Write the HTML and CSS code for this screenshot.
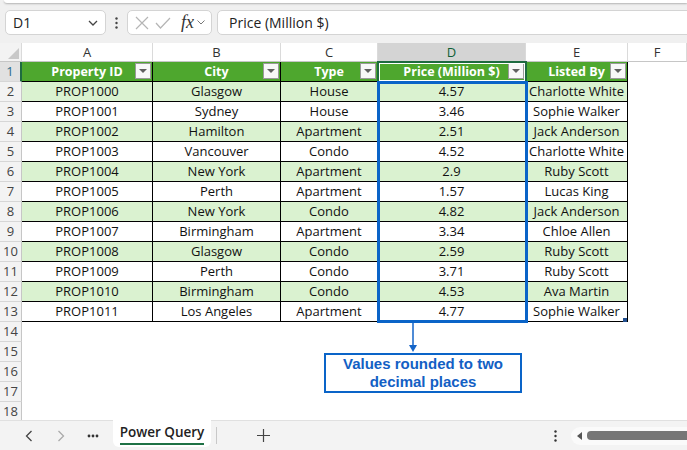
FILE: index.html
```
<!DOCTYPE html>
<html lang="en">

<head>
    <meta charset="UTF-8">
    <title>Power Query - Price</title>
    <link rel="stylesheet" href="styles.css">
</head>

<body>

    <!-- Formula bar -->
    <div class="topbar">
        <div class="ribbon-edge"></div>
        <div class="fbar">
            <div class="namebox">
                <span>D1</span>
                <svg width="10" height="6" viewBox="0 0 10 6"><polyline points="1,1 5,5 9,1" fill="none" stroke="#444" stroke-width="1.3"/></svg>
            </div>
            <div class="more">
                <svg width="3" height="12" viewBox="0 0 3 12"><circle cx="1.5" cy="1.5" r="1.2" fill="#444"/><circle cx="1.5" cy="6" r="1.2" fill="#444"/><circle cx="1.5" cy="10.5" r="1.2" fill="#444"/></svg>
            </div>
            <div class="fx-group">
                <svg width="14" height="14" viewBox="0 0 14 14"><path d="M1 1 L13 13 M13 1 L1 13" stroke="#b5b5b5" stroke-width="1.2"/></svg>
                <svg width="16" height="12" viewBox="0 0 16 12"><polyline points="1,6 5.5,11 15,1" fill="none" stroke="#b5b5b5" stroke-width="1.2"/></svg>
                <span class="fx">fx</span>
                <svg width="8" height="5" viewBox="0 0 8 5"><polyline points="0.5,0.5 4,4 7.5,0.5" fill="none" stroke="#777" stroke-width="1"/></svg>
            </div>
            <div class="formula">Price (Million $)</div>
        </div>
    </div>

    <!-- Grid -->
    <div class="sheet">
        <div class="row colhead">
            <div class="corner"><span class="tri"></span></div>
            <div>A</div>
            <div>B</div>
            <div>C</div>
            <div class="sel">D</div>
            <div>E</div>
            <div>F</div>
        </div>

        <div class="row">
            <div class="rn sel">1</div>
            <div class="c hd">Property ID<span class="flt"></span></div>
            <div class="c hd">City<span class="flt"></span></div>
            <div class="c hd">Type<span class="flt"></span></div>
            <div class="c hd">Price (Million $)<span class="flt"></span></div>
            <div class="c hd">Listed By<span class="flt"></span></div>
            <div class="e"></div>
        </div>
        <div class="row alt">
            <div class="rn">2</div>
            <div class="c">PROP1000</div><div class="c">Glasgow</div><div class="c">House</div><div class="c">4.57</div><div class="c">Charlotte White</div><div class="e"></div>
        </div>
        <div class="row">
            <div class="rn">3</div>
            <div class="c">PROP1001</div><div class="c">Sydney</div><div class="c">House</div><div class="c">3.46</div><div class="c">Sophie Walker</div><div class="e"></div>
        </div>
        <div class="row alt">
            <div class="rn">4</div>
            <div class="c">PROP1002</div><div class="c">Hamilton</div><div class="c">Apartment</div><div class="c">2.51</div><div class="c">Jack Anderson</div><div class="e"></div>
        </div>
        <div class="row">
            <div class="rn">5</div>
            <div class="c">PROP1003</div><div class="c">Vancouver</div><div class="c">Condo</div><div class="c">4.52</div><div class="c">Charlotte White</div><div class="e"></div>
        </div>
        <div class="row alt">
            <div class="rn">6</div>
            <div class="c">PROP1004</div><div class="c">New York</div><div class="c">Apartment</div><div class="c">2.9</div><div class="c">Ruby Scott</div><div class="e"></div>
        </div>
        <div class="row">
            <div class="rn">7</div>
            <div class="c">PROP1005</div><div class="c">Perth</div><div class="c">Apartment</div><div class="c">1.57</div><div class="c">Lucas King</div><div class="e"></div>
        </div>
        <div class="row alt">
            <div class="rn">8</div>
            <div class="c">PROP1006</div><div class="c">New York</div><div class="c">Condo</div><div class="c">4.82</div><div class="c">Jack Anderson</div><div class="e"></div>
        </div>
        <div class="row">
            <div class="rn">9</div>
            <div class="c">PROP1007</div><div class="c">Birmingham</div><div class="c">Apartment</div><div class="c">3.34</div><div class="c">Chloe Allen</div><div class="e"></div>
        </div>
        <div class="row alt">
            <div class="rn">10</div>
            <div class="c">PROP1008</div><div class="c">Glasgow</div><div class="c">Condo</div><div class="c">2.59</div><div class="c">Ruby Scott</div><div class="e"></div>
        </div>
        <div class="row">
            <div class="rn">11</div>
            <div class="c">PROP1009</div><div class="c">Perth</div><div class="c">Condo</div><div class="c">3.71</div><div class="c">Ruby Scott</div><div class="e"></div>
        </div>
        <div class="row alt">
            <div class="rn">12</div>
            <div class="c">PROP1010</div><div class="c">Birmingham</div><div class="c">Condo</div><div class="c">4.53</div><div class="c">Ava Martin</div><div class="e"></div>
        </div>
        <div class="row">
            <div class="rn">13</div>
            <div class="c">PROP1011</div><div class="c">Los Angeles</div><div class="c">Apartment</div><div class="c">4.77</div><div class="c">Sophie Walker</div><div class="e"></div>
        </div>
        <div class="row"><div class="rn">14</div><div class="blank"></div></div>
        <div class="row"><div class="rn">15</div><div class="blank"></div></div>
        <div class="row"><div class="rn">16</div><div class="blank"></div></div>
        <div class="row"><div class="rn">17</div><div class="blank"></div></div>
        <div class="row"><div class="rn">18</div><div class="blank"></div></div>

        <!-- overlays: selection, highlight and note -->
        <div class="active-cell"></div>
        <div class="highlight"></div>
        <div class="resize-handle"></div>
        <svg class="arrow" width="16" height="30" viewBox="0 0 16 30">
            <line x1="8" y1="0" x2="8" y2="23" stroke="#1565c8" stroke-width="1.5"/>
            <polygon points="4,22 12,22 8,29" fill="#1565c8"/>
        </svg>
        <div class="note">Values rounded to two<br>decimal places</div>
    </div>

    <!-- Sheet tabs -->
    <div class="tabs">
        <div class="nav">
            <svg width="8" height="12" viewBox="0 0 8 12"><polyline points="6.5,1 1.5,6 6.5,11" fill="none" stroke="#444" stroke-width="1.3"/></svg>
        </div>
        <div class="nav">
            <svg width="8" height="12" viewBox="0 0 8 12"><polyline points="1.5,1 6.5,6 1.5,11" fill="none" stroke="#aaa" stroke-width="1.3"/></svg>
        </div>
        <div class="nav">
            <svg width="12" height="4" viewBox="0 0 12 4"><circle cx="2" cy="2" r="1.4" fill="#333"/><circle cx="6" cy="2" r="1.4" fill="#333"/><circle cx="10" cy="2" r="1.4" fill="#333"/></svg>
        </div>
        <div class="tab"><span>Power Query</span></div>
        <div class="tab-sep"></div>
        <div class="add">
            <svg width="13" height="13" viewBox="0 0 13 13"><path d="M6.5 0 V13 M0 6.5 H13" stroke="#444" stroke-width="1.2"/></svg>
        </div>
        <div class="spacer"></div>
        <div class="vdots">
            <svg width="3" height="12" viewBox="0 0 3 12"><circle cx="1.5" cy="1.5" r="1.2" fill="#333"/><circle cx="1.5" cy="6" r="1.2" fill="#333"/><circle cx="1.5" cy="10.5" r="1.2" fill="#333"/></svg>
        </div>
        <div class="hscroll">
            <svg width="6" height="8" viewBox="0 0 6 8"><polygon points="5,0 5,8 0,4" fill="#555"/></svg>
            <div class="thumb"></div>
        </div>
    </div>

</body>

</html>
```

FILE: styles.css
```
* {
    box-sizing: border-box;
}

body {
    margin: 0;
    width: 687px;
    height: 450px;
    overflow: hidden;
    background-color: #f0f0f0;
    font-family: "Open Sans", sans-serif;
    color: #222;
}

/* formula bar */
.topbar {
    height: 43px;
    background-color: #f0f0f0;
}

.ribbon-edge {
    height: 3px;
    margin-left: 4px;
    background-color: #fff;
    border-bottom-left-radius: 6px;
    box-shadow: 0 1px 2px rgba(0, 0, 0, 0.25);
}

.fbar {
    display: flex;
    align-items: center;
    height: 25px;
    margin-top: 7px;
    padding-left: 5px;
}

.namebox {
    width: 101px;
    height: 25px;
    display: flex;
    align-items: center;
    justify-content: space-between;
    padding: 0 7px 0 7px;
    background-color: #fff;
    border: 1px solid #d4d4d4;
    border-radius: 5px;
    font-size: 14px;
}

.more {
    width: 21px;
    display: flex;
    justify-content: center;
}

.fx-group {
    width: 85px;
    height: 25px;
    display: flex;
    align-items: center;
    gap: 6px;
    padding: 0 4px 0 7px;
    background-color: #fff;
    border: 1px solid #d4d4d4;
    border-radius: 5px;
}

.fx {
    font-family: "Liberation Serif", serif;
    font-style: italic;
    font-size: 18px;
    color: #333;
    margin-left: 4px;
    margin-right: -3px;
}

.formula {
    flex: 1;
    height: 25px;
    margin-left: 5px;
    margin-right: -10px;
    padding-left: 11px;
    display: flex;
    align-items: center;
    background-color: #fff;
    border: 1px solid #d4d4d4;
    border-radius: 5px;
    font-size: 14px;
}

/* grid */
.sheet {
    position: relative;
    height: 377px;
    overflow: hidden;
    background-color: #fff;
}

.row {
    display: grid;
    grid-template-columns: 22px 131px 128px 97px 148px 102px 1fr;
    height: 20px;
}

.colhead {
    height: 19px;
}

.colhead > div {
    border-right: 1px solid #dadada;
    border-bottom: 1px solid #c6c6c6;
    text-align: center;
    font-size: 13px;
    line-height: 18px;
    color: #333;
    background-color: #fff;
}

.colhead .corner {
    position: relative;
    background-color: #f3f3f3;
}

.tri {
    position: absolute;
    right: 2px;
    bottom: 2px;
    border-left: 11px solid transparent;
    border-bottom: 11px solid #c8c8c8;
}

.colhead .sel {
    background-color: #d4d4d4;
    color: #0f5f36;
}

.rn {
    background-color: #f3f3f3;
    border-right: 1px solid #c6c6c6;
    border-bottom: 1px solid #d6d6d6;
    text-align: center;
    font-size: 13px;
    line-height: 19px;
    color: #444;
}

.rn.sel {
    background-color: #e1e1e1;
    color: #2a6a8c;
    border-right: 2px solid #1e6b40;
}

.c {
    position: relative;
    border-right: 1px solid #000;
    border-bottom: 1px solid #000;
    text-align: center;
    font-size: 13px;
    line-height: 19px;
    color: #111;
    white-space: nowrap;
    overflow: hidden;
}

.row.alt .c {
    background-color: #daf2d0;
}

.c.hd {
    background-color: #4ea72e;
    color: #fff;
    font-weight: bold;
    font-size: 12.5px;
}

.flt {
    position: absolute;
    right: 1px;
    top: 1px;
    width: 16px;
    height: 16px;
    background-color: #f8f8f8;
    border: 1px solid #9a9a9a;
}

.flt::after {
    content: "";
    position: absolute;
    left: 3px;
    top: 5px;
    border-left: 4px solid transparent;
    border-right: 4px solid transparent;
    border-top: 4px solid #606060;
}

.blank {
    grid-column: 2 / -1;
}

/* overlays */
.active-cell {
    position: absolute;
    left: 377px;
    top: 18px;
    width: 150px;
    height: 22px;
    border: 2px solid #1e6b40;
    box-shadow: inset 0 0 0 1px #fff;
}

.highlight {
    position: absolute;
    left: 377px;
    top: 38px;
    width: 151px;
    height: 242px;
    border: 3px solid #0a64c8;
}

.resize-handle {
    position: absolute;
    left: 623px;
    top: 275px;
    width: 4px;
    height: 4px;
    background-color: #23508f;
}

.arrow {
    position: absolute;
    left: 405px;
    top: 280px;
}

.note {
    position: absolute;
    left: 324px;
    top: 310px;
    width: 198px;
    height: 40px;
    background-color: #fff;
    border: 2px solid #0a64c8;
    text-align: center;
    font-family: "Liberation Sans", Arial, sans-serif;
    font-weight: bold;
    font-size: 15px;
    line-height: 18px;
    color: #1260c4;
}

/* sheet tabs */
.tabs {
    height: 30px;
    display: flex;
    align-items: center;
    padding-left: 13px;
    background-color: #f3f3f3;
    border-top: 1px solid #e0e0e0;
}

.nav {
    width: 32px;
    display: flex;
    justify-content: center;
}

.tab {
    align-self: flex-start;
    width: 98px;
    height: 27px;
    margin-top: -1px;
    margin-left: 4px;
    display: flex;
    justify-content: center;
    background-color: #fff;
    border-radius: 0 0 6px 6px;
}

.tab span {
    height: 25px;
    padding-top: 3px;
    font-size: 13.5px;
    font-weight: 600;
    color: #222;
    border-bottom: 2px solid #1e7145;
}

.tab-sep {
    width: 1px;
    height: 17px;
    margin-left: 5px;
    background-color: #c8c8c8;
}

.add {
    width: 32px;
    margin-left: 30px;
    display: flex;
    justify-content: center;
}

.spacer {
    flex: 1;
}

.vdots {
    width: 12px;
    display: flex;
    justify-content: center;
    margin-right: 10px;
}

.hscroll {
    width: 130px;
    height: 18px;
    margin-right: -14px;
    display: flex;
    align-items: center;
    gap: 4px;
    padding-left: 6px;
    background-color: #fafafa;
    border-radius: 9px;
}

.thumb {
    flex: 1;
    height: 9px;
    background-color: #767676;
    border-radius: 4px;
}
```
